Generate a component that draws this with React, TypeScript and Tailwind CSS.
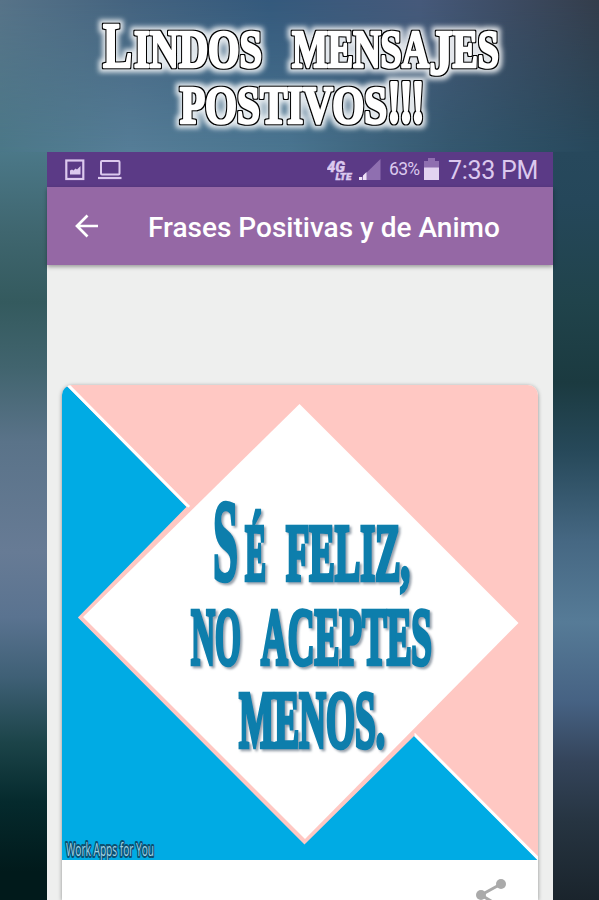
import type { ReactNode } from 'react';

const displayFont = '"Liberation Serif", serif';

function BannerWord({ x, y, size, width, children }: { x: number; y: number; size: number; width: number; children: ReactNode }) {
    return (
        <text x={x} y={y} fontSize={size} textLength={width} lengthAdjust="spacingAndGlyphs">{children}</text>
    );
}

function Banner() {
    return (
        <header className="relative h-[152px] shrink-0 bg-[linear-gradient(to_right,#4b7888_0px,#567e98_130px,#4a7590_290px,#34586f_450px,#27485c_599px)]">
            <div className="absolute inset-0 bg-[linear-gradient(to_right,#577388_0px,#44637f_130px,#34597c_270px,#46597a_420px,#343d4b_599px)] [mask-image:linear-gradient(to_bottom,black,transparent)]" />
            <svg className="relative block w-full h-full" viewBox="0 0 599 152" fontFamily={displayFont} fontWeight="700">
                <filter id="outline" x="-10%" y="-20%" width="120%" height="140%" colorInterpolationFilters="sRGB">
                    <feMorphology in="SourceAlpha" operator="dilate" radius="1.2" result="edge" />
                    <feMorphology in="SourceAlpha" operator="dilate" radius="4" result="wide" />
                    <feGaussianBlur in="wide" stdDeviation="2.5" result="soft" />
                    <feFlood floodColor="#fff" floodOpacity="0.85" />
                    <feComposite in2="soft" operator="in" result="glow" />
                    <feMerge>
                        <feMergeNode in="glow" />
                        <feMergeNode in="edge" />
                        <feMergeNode in="SourceGraphic" />
                    </feMerge>
                </filter>
                <g fill="#fff" stroke="#fff" strokeWidth="2.6" strokeLinejoin="round" filter="url(#outline)">
                    <BannerWord x={103} y={67} size={63} width={29}>L</BannerWord>
                    <BannerWord x={134} y={67} size={52} width={128}>INDOS</BannerWord>
                    <BannerWord x={292} y={67} size={52} width={207}>
                        MENSA<tspan fontSize="64" dy="7">J</tspan><tspan dy="-7">ES</tspan>
                    </BannerWord>
                    <BannerWord x={180} y={123} size={52} width={207}>POSTIVOS</BannerWord>
                    <g strokeWidth="4">
                        <BannerWord x={388} y={122} size={60} width={36}>!!!</BannerWord>
                    </g>
                </g>
            </svg>
        </header>
    );
}

function StatusBar() {
    return (
        <div className="flex items-center h-[35px] bg-[#5b3a86] pl-[18px] pr-[14px] text-[#dcc9ee]">
            <svg width="20" height="22" viewBox="0 0 20 22">
                <rect x="1.3" y="1.5" width="17" height="18.5" fill="none" stroke="currentColor" strokeWidth="2.2" />
                <path d="M5 15.500v-4l2-1 1.500 1 2-2 1.500 1L15.500 7v8.500z" fill="currentColor" />
            </svg>
            <svg className="ml-[12px]" width="25" height="22" viewBox="0 0 25 22">
                <rect x="4" y="2" width="18.500" height="13.500" rx="1" fill="none" stroke="currentColor" strokeWidth="2" />
                <path d="M1 19h23.500" stroke="currentColor" strokeWidth="2.2" />
            </svg>
            <div className="grow" />
            <svg width="27" height="24" viewBox="0 0 27 24" fill="currentColor" stroke="currentColor" strokeWidth="0.4" fontFamily="Roboto, sans-serif" fontStyle="italic" fontWeight="900">
                <text x="0" y="14" fontSize="15" textLength="18" lengthAdjust="spacingAndGlyphs">4G</text>
                <text x="8.500" y="22.300" fontSize="9" textLength="16" lengthAdjust="spacingAndGlyphs">LTE</text>
            </svg>
            <svg className="ml-[4px] mr-px" width="23" height="24" viewBox="0 0 23 24">
                <path d="M22.500 1v21H1z" fill="#8f6fb0" />
                <path d="M1 19h3v3H1zM5 17.500l3.500-3.500v8H5z" fill="#eee3f7" />
            </svg>
            <span className="ml-[7px] w-[32px] font-[Roboto,sans-serif] text-[17.500px] tracking-[-0.7px]">63%</span>
            <svg className="ml-[3px]" width="15" height="23" viewBox="0 0 15 23">
                <path d="M4 0h7v3h4v7H0V3h4z" fill="#8f6fb0" />
                <path d="M0 9.500h15V22H0z" fill="#e2d3f0" />
            </svg>
            <span className="ml-[9px] w-[91px] mt-[2px] font-[Roboto,sans-serif] text-[25px] tracking-[-0.3px] whitespace-nowrap">7:33 PM</span>
        </div>
    );
}

function Toolbar() {
    return (
        <div className="relative flex items-center h-[78px] bg-[#9568a5] text-white shadow-[0_2px_4px_rgba(0,0,0,0.35)]">
            <svg className="ml-[28px]" width="24" height="24" viewBox="0 0 24 24" fill="none" stroke="currentColor" strokeWidth="2.700">
                <path d="M23 12H2.500M12.500 1.500L2 12l10.500 10.500" />
            </svg>
            <h1 className="ml-[49px] mt-[4px] font-[Roboto,sans-serif] font-medium text-[28px] whitespace-nowrap">Frases Positivas y de Animo</h1>
        </div>
    );
}

function Poster() {
    return (
        <svg className="block w-full h-[475px]" viewBox="62 385 476 475">
            <rect x="62" y="385" width="476" height="475" fill="#ffc8c3" />
            <path d="M62 381L187 507.500 79 617.500 304.500 843.500 414 735 538 860H62z" fill="#00abe4" />
            <path d="M68 385L189 507M414 734L539 859.500" stroke="#fff" strokeWidth="3" />
            <path d="M299.500 404L518.500 623 305 839 83 617z" fill="#fff" />
            <path d="M188 507.500L80 617.500 304.500 842.500 414 734" fill="none" stroke="#ffc8c3" strokeWidth="3" />
            <filter id="textShadow">
                <feDropShadow dx="2" dy="2" stdDeviation="1.200" floodColor="#567" floodOpacity="0.6" />
            </filter>
            <g fill="#087eac" stroke="#087eac" strokeWidth="3" fontFamily={displayFont} fontWeight="700" filter="url(#textShadow)">
                <g transform="translate(0 580) scale(1 1.550)">
                    <text x="213" y="0" fontSize="75" textLength="25" lengthAdjust="spacingAndGlyphs">S</text>
                    <text x="245" y="0" fontSize="52" textLength="21" lengthAdjust="spacingAndGlyphs">É</text>
                    <text x="286" y="0" fontSize="52" textLength="124" lengthAdjust="spacingAndGlyphs">FELIZ,</text>
                </g>
                <g transform="translate(0 663.500) scale(1 1.550)" fontSize="52">
                    <text x="191" y="0" textLength="50" lengthAdjust="spacingAndGlyphs">NO</text>
                    <text x="261" y="0" textLength="171" lengthAdjust="spacingAndGlyphs">ACEPTES</text>
                </g>
                <g transform="translate(0 746.500) scale(1 1.550)" fontSize="52">
                    <text x="239" y="0" textLength="146" lengthAdjust="spacingAndGlyphs">MENOS.</text>
                </g>
            </g>
            <text x="66" y="856" fontFamily='"Open Sans", sans-serif' fontSize="18.500" textLength="88" lengthAdjust="spacingAndGlyphs" fill="#9fd3e4" stroke="#0d4f70" strokeWidth="4" strokeLinejoin="round" paintOrder="stroke">Work Apps for You</text>
        </svg>
    );
}

function ShareIcon() {
    return (
        <svg width="32" height="36" viewBox="0 0 32 36" fill="#aaa">
            <path d="M26 6L6 17l20 12" fill="none" stroke="#aaa" strokeWidth="3" />
            <circle cx="26" cy="6" r="5" />
            <circle cx="6" cy="17" r="5" />
            <circle cx="26" cy="29" r="5" />
        </svg>
    );
}

export default function App() {
    return (
        <div className="flex flex-col w-[599px] h-[900px] overflow-hidden">
            <Banner />
            <div className="flex grow">
                <div className="w-[47px] bg-[linear-gradient(to_bottom,#4b7888_0px,#3f666f_80px,#345a5e_150px,#41646e_215px,#5a7389_290px,#677b95_400px,#5a7390_465px,#3f6076_525px,#1c4449_590px,#052a2d_650px,#011a1b_720px)]" />
                <div className="flex flex-col w-[506px] bg-[#eeefee]">
                    <StatusBar />
                    <Toolbar />
                    <main className="flex flex-col grow pt-[120px] pl-[15px] pr-[15px]">
                        <div className="h-[515px] -mb-[120px] rounded-t-[10px] overflow-hidden bg-white shadow-[0_1px_4px_rgba(0,0,0,0.4)]">
                            <Poster />
                            <div className="flex justify-end pt-[18px] pr-[31px]">
                                <ShareIcon />
                            </div>
                        </div>
                    </main>
                </div>
                <div className="w-[46px] bg-[linear-gradient(to_bottom,#27485c_0px,#25475a_50px,#20434b_150px,#1b3a40_230px,#27495a_300px,#466883_390px,#567b97_470px,#466283_550px,#34445a_610px,#263441_670px,#1a242c_748px)]" />
            </div>
        </div>
    );
}
